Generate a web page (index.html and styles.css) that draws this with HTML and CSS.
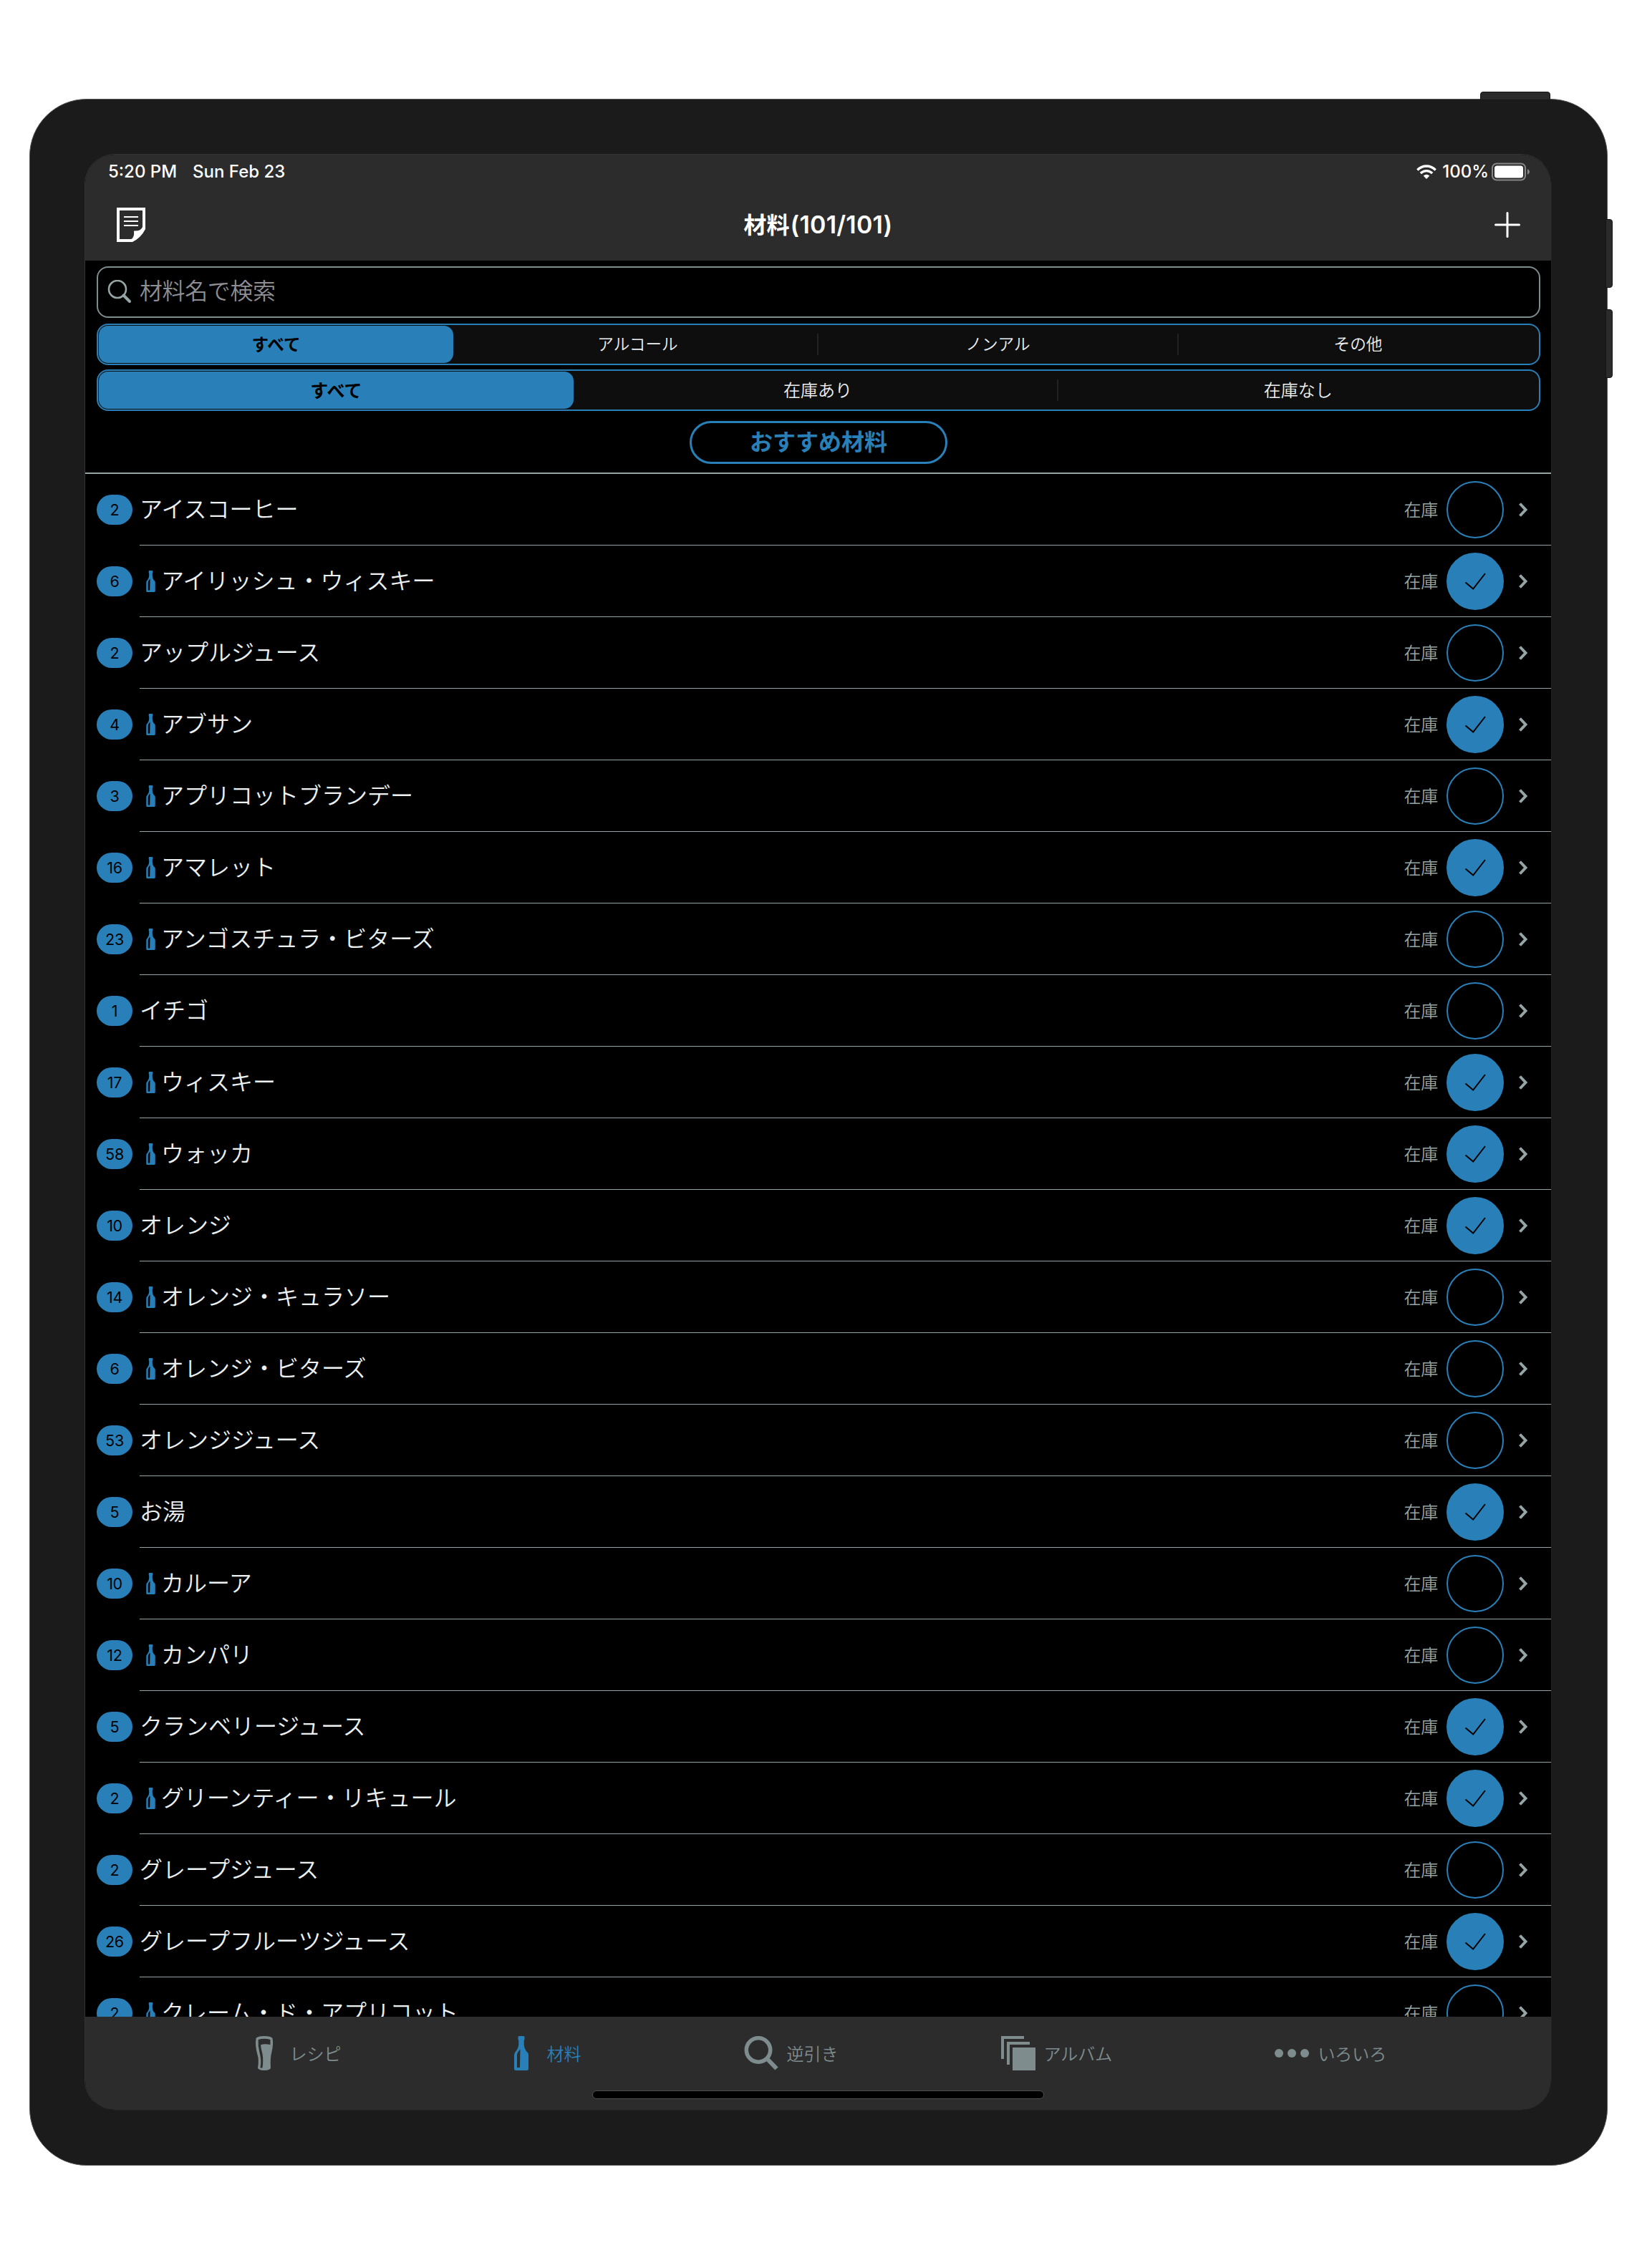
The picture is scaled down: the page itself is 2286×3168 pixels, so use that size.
FILE: index.html
```html
<!DOCTYPE html>
<html lang="ja">
<head>
<meta charset="utf-8">
<title>材料</title>
<link rel="stylesheet" href="styles.css">
</head>
<body>
<svg class="defs" width="0" height="0" aria-hidden="true">
  <symbol id="bottle" viewBox="0 0 20 48"><path fill-rule="evenodd" d="M7 0h6q1.500 0 1.500 2v2.500l-.8 2V12q.3 5 3.200 9.200Q20 23 20 26.500V45.500q0 2.500-2.500 2.500h-15Q0 48 0 45.500V26.500Q0 23 2.700 21Q6 17 6.300 12V6.500l-.8-2V2Q5.500 0 7 0ZM8.500 18.500Q4 23 4 26.500V44h4Z"/></symbol>
  <symbol id="check" viewBox="0 0 80 80"><path d="M26.500 41.500L37.200 50.500L54 29" fill="none" stroke="#000" stroke-width="2"/></symbol>
  <symbol id="chevron" viewBox="0 0 12 20"><path d="M1.500 1.500L9.500 10L1.500 18.500" fill="none" stroke="#95a5a6" stroke-width="4"/></symbol>
</svg>
<div class="device">
  <i class="button power"></i><i class="button vol-up"></i><i class="button vol-down"></i>
  <div class="screen">
    <header class="top">
      <div class="status">
        <span class="time">5:20 PM</span><span>Sun Feb 23</span>
        <svg class="wifi" width="28" height="20" viewBox="0 0 28 20"><g fill="none" stroke="#fff" stroke-width="3.400"><path d="M1.300 7.500Q7 2 14 2T26.700 7.500"/><path d="M5.800 12Q9.500 8.600 14 8.600T22.200 12"/></g><path d="M9.700 15.500Q14 12 18.300 15.500L14 20Z" fill="#fff"/></svg>
        <span class="percent">100%</span>
        <svg class="battery" width="54" height="26" viewBox="0 0 54 26"><rect x="1" y="1.500" width="46" height="23" rx="6" fill="none" stroke="#868686" stroke-width="2"/><rect x="4" y="4.500" width="40" height="17" rx="3.500" fill="#fff"/><path d="M50 9q3 1.500 3 4t-3 4Z" fill="#868686"/></svg>
      </div>
      <div class="nav">
        <svg width="40" height="48" viewBox="0 0 40 48"><path fill="#fff" fill-rule="evenodd" d="M0 0H40V30Q34 42 22 48H0ZM4 4V44H20Q25 42 24 32.500Q34 33 36 27V4Z"/><path d="M10 13H30M10 19H30M10 25H30" stroke="#fff" stroke-width="2"/></svg>
        <h1><span>材料</span>(101/101)</h1>
        <svg width="36" height="36" viewBox="0 0 36 36"><path d="M18 1.500V34.500M1.500 18H34.500" stroke="#fff" stroke-width="3" stroke-linecap="round"/></svg>
      </div>
    </header>
    <section class="filters">
      <div class="search">
        <svg width="34" height="34" viewBox="0 0 34 34"><circle cx="14" cy="13" r="12" fill="none" stroke="#95a5a6" stroke-width="2.600"/><path d="M22.500 21.500L31 30" stroke="#95a5a6" stroke-width="4" stroke-linecap="round"/></svg>
        <span>材料名で検索</span>
      </div>
      <div class="segments kinds"><span class="on">すべて</span><span>アルコール</span><span class="split">ノンアル</span><span class="split">その他</span></div>
      <div class="segments stock"><span class="on">すべて</span><span>在庫あり</span><span class="split">在庫なし</span></div>
      <button class="recommend">おすすめ材料</button>
    </section>
    <ul class="list" id="list"></ul>
    <nav class="tabs">
      <div class="tab"><svg width="48" height="48" viewBox="0 0 48 48" fill="#7f8c8d"><path fill-rule="evenodd" d="M12.500 3Q15 0 24 0T35.500 3Q37 12 34.500 22Q32 31 33 45Q31 48 24 48T15 45Q17 33 14.500 26Q11 14 12.500 3ZM15.700 5Q15 14 17.500 23Q20.500 34 18.500 44.500H21.500Q23 34 21.500 25Q19.500 18 19 12.500Q23 10.500 32.500 12V5Q24 2.500 15.700 5Z"/></svg><span>レシピ</span></div>
      <div class="tab active"><svg width="48" height="48" viewBox="0 0 48 48"><use href="#bottle" x="14" width="20" height="48"/></svg><span>材料</span></div>
      <div class="tab"><svg width="48" height="48" viewBox="0 0 48 48"><g fill="none" stroke="#7f8c8d"><circle cx="20" cy="19.500" r="16.700" stroke-width="5.500"/><path d="M31.500 31L45.500 45.500" stroke-width="6"/></g></svg><span>逆引き</span></div>
      <div class="tab"><svg width="48" height="48" viewBox="0 0 48 48" fill="#7f8c8d"><path d="M0 0H32V4H4V32H0ZM8 8H40V12H12V40H8ZM16 16H48V48H16Z"/></svg><span>アルバム</span></div>
      <div class="tab"><svg width="48" height="48" viewBox="0 0 48 48" fill="#7f8c8d"><circle cx="6" cy="24" r="6"/><circle cx="24" cy="24" r="6"/><circle cx="42" cy="24" r="6"/></svg><span>いろいろ</span></div>
      <i class="home"></i>
    </nav>
  </div>
</div>
<script src="list.js"></script>
</body>
</html>
```
FILE: styles.css
```css
* { box-sizing: border-box; }
body { margin: 0; width: 2286px; height: 3168px; overflow: hidden; background: #fff; padding: 138px 41px 0; font-family: Inter, "Noto Sans CJK JP", sans-serif; color: #ecf0f1; }
.defs { position: absolute; }
.device { position: relative; width: 2204px; height: 2887px; border-radius: 80px; background: #1b1b1b; border: 1px solid #555; padding: 76px 76px 0; }
.button { position: absolute; background: #2b2b2b; border: 1px solid #161616; }
.power { left: 2025px; top: -11px; width: 98px; height: 12px; border-radius: 4px 4px 0 0; }
.vol-up, .vol-down { left: 2200px; width: 10px; height: 96px; border-radius: 0 4px 4px 0; }
.vol-up { top: 167px; }
.vol-down { top: 293px; }
.screen { width: 2049px; height: 2733px; border: 1px solid #333; border-right-color: #222; border-bottom-color: #222; border-radius: 42px; overflow: hidden; background: #000; display: flex; flex-direction: column; }
.top { height: 148px; flex: none; background: #2c2c2c; color: #fff; }
.status { height: 48px; padding: 0 29px 0 32px; display: flex; align-items: center; font-size: 24px; font-weight: 500; white-space: nowrap; }
.status span { padding-bottom: 2px; }
.time { margin-right: 22px; }
.wifi { margin-left: auto; }
.percent { margin: 0 4px 0 8px; }
.nav { height: 100px; padding: 0 43px 0 44px; display: flex; align-items: center; justify-content: space-between; }
h1 { margin: 0 5px 0 0; font-size: 34px; font-weight: 600; line-height: 48px; letter-spacing: .2px; }
h1 span { font-size: 32px; letter-spacing: 0; margin-right: 1px; }
.filters { height: 298px; flex: none; padding: 8px 15px 0 16px; border-bottom: 2px solid #95a5a6; display: flex; flex-direction: column; }
.search { height: 72px; border: 2px solid #7f8c8d; border-radius: 16px; display: flex; align-items: center; gap: 11px; padding-left: 13px; margin-bottom: 8px; color: #8e8e93; font-size: 32px; letter-spacing: -.4px; font-weight: 350; line-height: 40px; }
.search span { padding-bottom: 3px; }
.segments { height: 58px; border: 2px solid #2980b9; border-radius: 16px; background: #0e0e0e; display: grid; grid-auto-flow: column; grid-auto-columns: minmax(0, 1fr); margin-bottom: 6px; font-weight: 350; }
.segments span { display: flex; align-items: center; justify-content: center; position: relative; padding: 0 2px 3px 0; }
.segments .on { margin: 1px 7px 1px 1px; border-radius: 13px; background: #2980b9; color: #000; font-weight: 600; padding-right: 0; }
.segments .split::before { content: ""; position: absolute; left: -2px; top: 12px; width: 2px; height: 30px; background: #222; }
.kinds { font-size: 22.600px; }
.kinds .on { font-size: 23.600px; }
.stock { font-size: 24px; }
.stock .on { font-size: 25px; }
.recommend { width: 360px; height: 60px; margin: 8px auto 0; border: 3px solid #2980b9; border-radius: 30px; background: none; color: #2980b9; font: 600 32px/40px Inter, "Noto Sans CJK JP", sans-serif; padding: 0; }
.list { flex: 1; min-height: 0; overflow: hidden; margin: 0; padding: 0 0 0 16px; list-style: none; }
.row { height: 100px; display: flex; gap: 10px; }
.count { flex: none; width: 50px; height: 42px; margin-top: 29px; border-radius: 21px; background: #2980b9; color: #000; font-size: 21.500px; font-weight: 400; letter-spacing: -.3px; display: flex; align-items: center; justify-content: center; }
.line { flex: 1; border-bottom: 1px solid #95a5a6; display: flex; align-items: center; padding: 1px 33px 0 0; }
.bottle { width: 13px; height: 30px; margin: 0 8px 0 9px; fill: #2980b9; }
.name { font-size: 32px; font-weight: 350; margin-right: auto; line-height: 44px; }
.label { font-size: 24px; font-weight: 350; color: #95a5a6; margin-right: 12px; letter-spacing: -.3px; padding-bottom: 3px; }
.mark { width: 80px; height: 80px; border-radius: 50%; border: 2px solid #2980b9; display: block; }
.mark svg { display: block; margin: -2px; }
.mark.on { background: #2980b9; }
.chevron { margin-left: 21px; }
.tabs { height: 130px; flex: none; background: #2c2c2c; color: #7f8c8d; display: flex; justify-content: center; gap: 227px; padding: 27px 4px 0 0; position: relative; font-size: 24px; font-weight: 350; }
.tab { height: 48px; display: flex; align-items: center; gap: 12px; white-space: nowrap; line-height: 30px; }
.tab span { padding-top: 4px; }
.active { color: #2980b9; fill: #2980b9; }
.home { position: absolute; left: 708px; top: 103px; width: 631px; height: 12px; border-radius: 6px; background: #000; border: 1px solid #505050; }
```
FILE: list.js
```js
// [recipe count, name, is alcohol, in stock]
const items = [
  [2, "アイスコーヒー", 0, 0], [6, "アイリッシュ・ウィスキー", 1, 1], [2, "アップルジュース", 0, 0],
  [4, "アブサン", 1, 1], [3, "アプリコットブランデー", 1, 0], [16, "アマレット", 1, 1],
  [23, "アンゴスチュラ・ビターズ", 1, 0], [1, "イチゴ", 0, 0], [17, "ウィスキー", 1, 1],
  [58, "ウォッカ", 1, 1], [10, "オレンジ", 0, 1], [14, "オレンジ・キュラソー", 1, 0],
  [6, "オレンジ・ビターズ", 1, 0], [53, "オレンジジュース", 0, 0], [5, "お湯", 0, 1],
  [10, "カルーア", 1, 0], [12, "カンパリ", 1, 0], [5, "クランベリージュース", 0, 1],
  [2, "グリーンティー・リキュール", 1, 1], [2, "グレープジュース", 0, 0],
  [26, "グレープフルーツジュース", 0, 1], [2, "クレーム・ド・アプリコット", 1, 0]
];
document.getElementById("list").innerHTML = items.map(([count, name, alcohol, stock]) => `
<li class="row"><span class="count">${count}</span><div class="line">
${alcohol ? '<svg class="bottle"><use href="#bottle"/></svg>' : ""}<span class="name">${name}</span>
<span class="label">在庫</span><span class="mark${stock ? " on" : ""}">${stock ? '<svg width="80" height="80"><use href="#check"/></svg>' : ""}</span>
<svg class="chevron" width="12" height="20"><use href="#chevron"/></svg></div></li>`).join("");
```
